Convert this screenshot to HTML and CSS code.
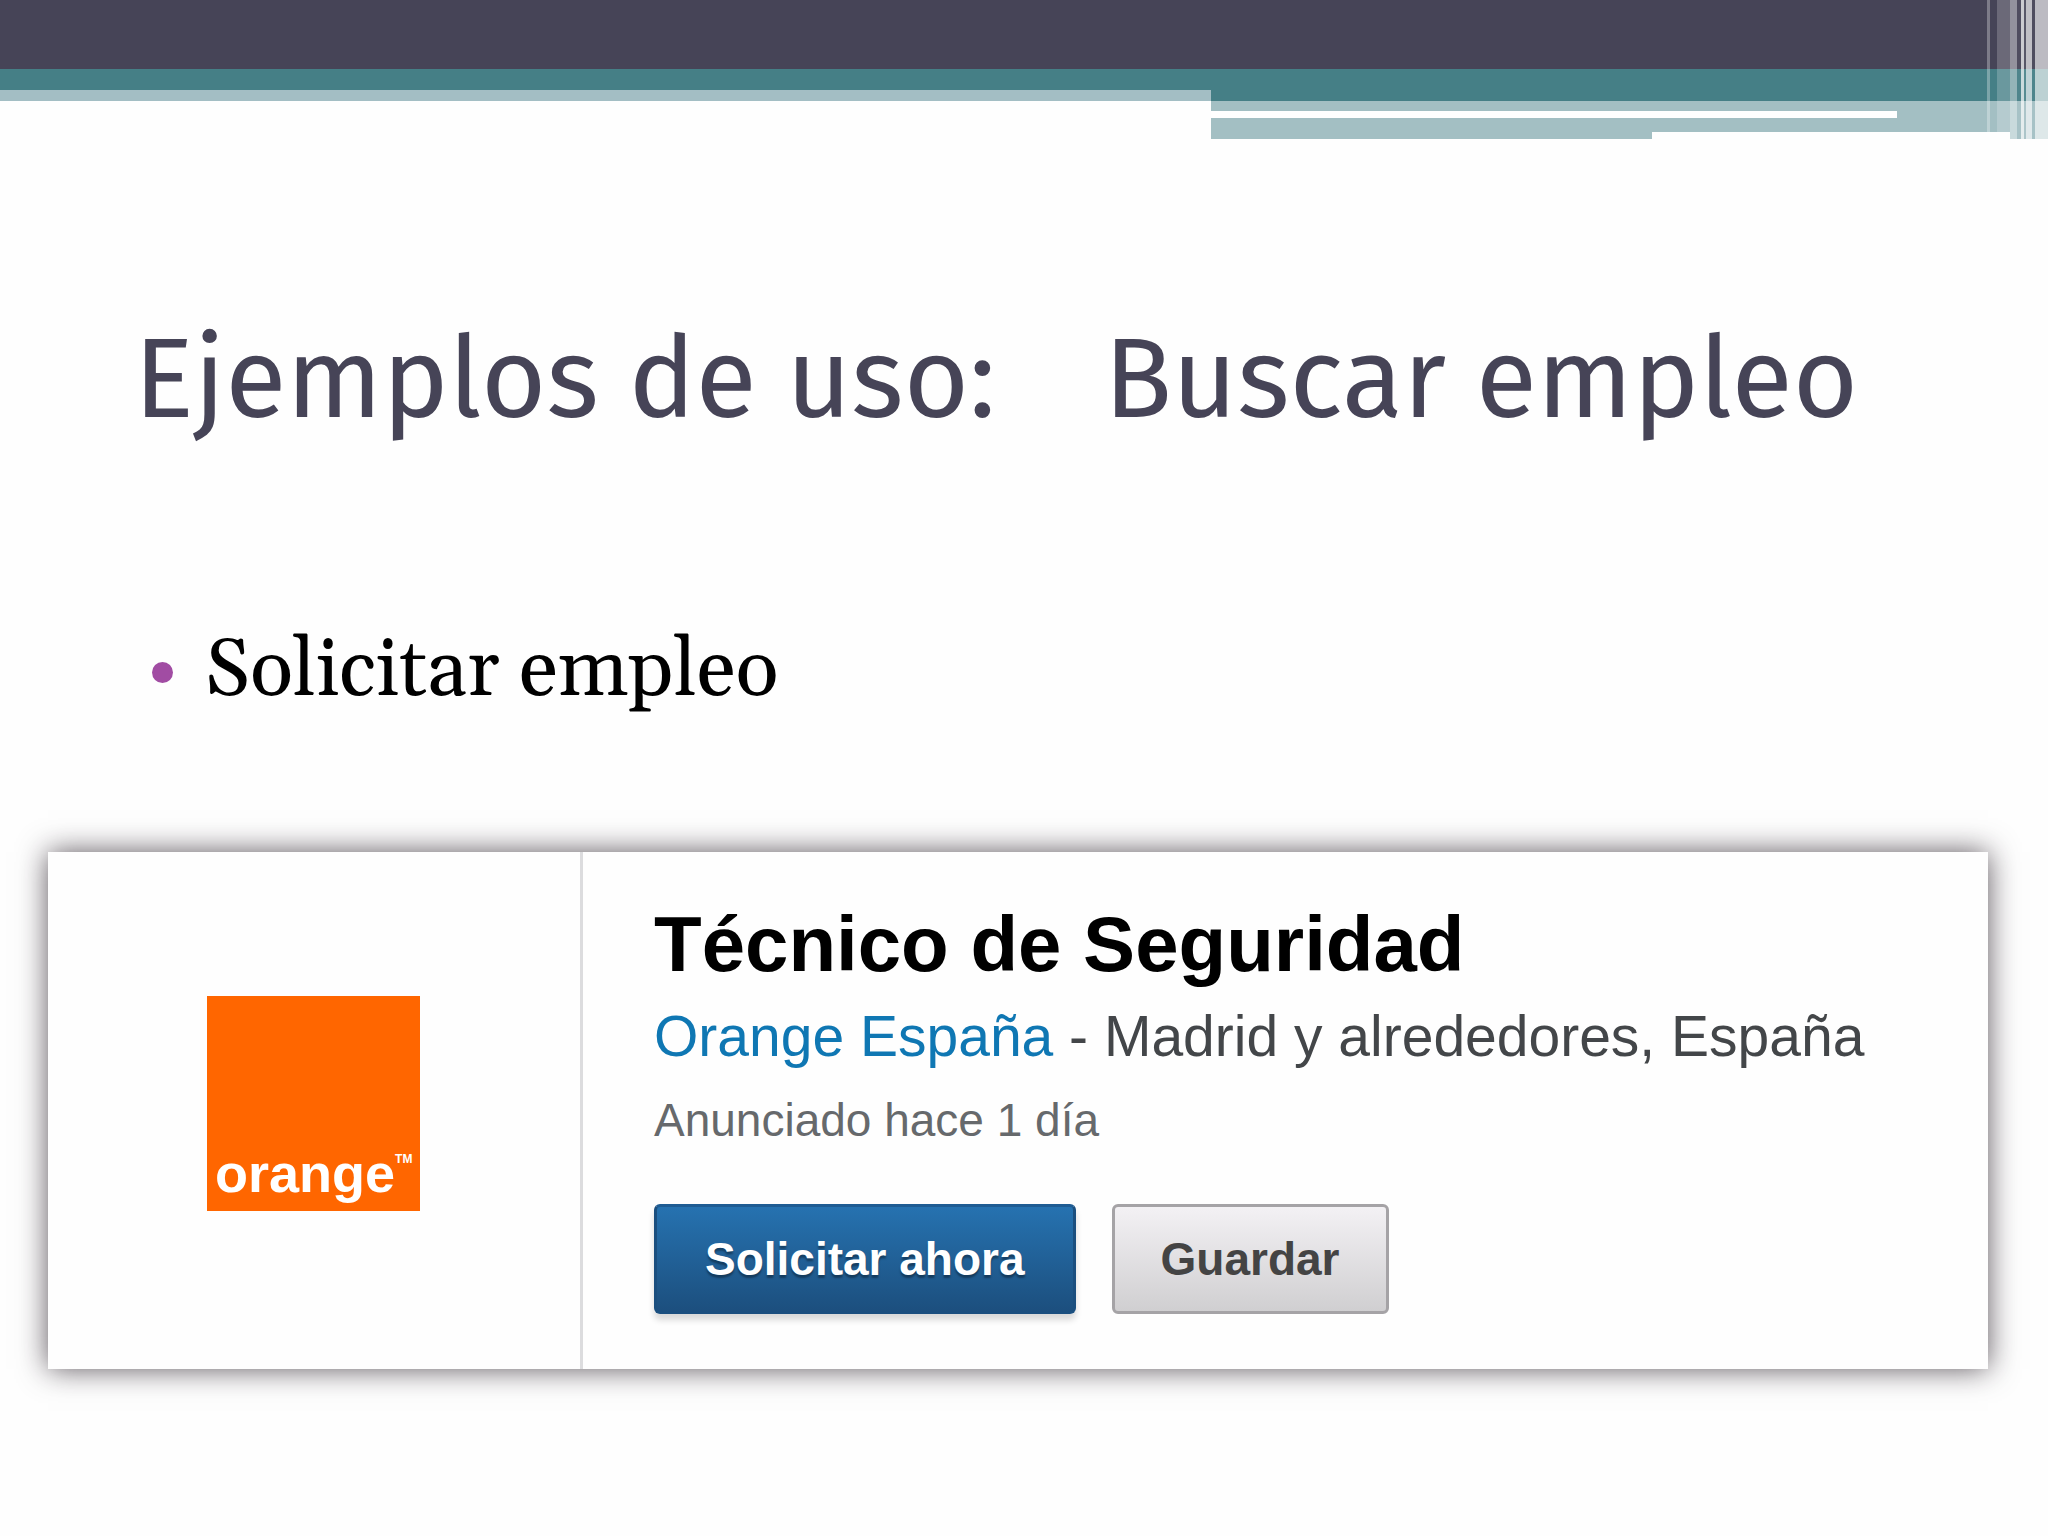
FILE: index.html
```html
<!DOCTYPE html>
<html lang="es">
<head>
<meta charset="utf-8">
<meta name="viewport" content="width=device-width, initial-scale=1">
<title>Ejemplos de uso: Buscar empleo</title>
<link rel="stylesheet" href="styles.css">
</head>
<body>
<header class="banner">
  <div class="banner-top"></div>
  <div class="banner-row">
    <div class="banner-left"></div>
    <div class="banner-right">
      <div class="band band-teal"></div>
      <div class="band band-pale"></div>
      <div class="band band-line"></div>
      <div class="band band-lower"></div>
      <div class="band band-ends"><span></span><span></span></div>
    </div>
  </div>
  <div class="stripes">
    <i class="s1"></i><i class="s2"></i><i class="s3"></i><i class="s4"></i><i class="s5"></i><i class="s6"></i><i class="s7"></i><i class="s8"></i><i class="s9"></i><i class="s10"></i>
  </div>
</header>
<main>
  <h1 class="title"><span>Ejemplos de uso:</span><span>Buscar empleo</span></h1>
  <ul class="points">
    <li>Solicitar empleo</li>
  </ul>
  <article class="job">
    <div class="job-brand">
      <div class="logo"><span class="logo-name">orange</span><span class="logo-mark">TM</span></div>
    </div>
    <div class="job-info">
      <h2 class="job-title">Técnico de Seguridad</h2>
      <p class="job-place"><a href="#">Orange España</a> - Madrid y alrededores, España</p>
      <p class="job-date">Anunciado hace 1 día</p>
      <div class="actions">
        <button type="button" class="btn btn-primary">Solicitar ahora</button>
        <button type="button" class="btn btn-plain">Guardar</button>
      </div>
    </div>
  </article>
</main>
</body>
</html>
```
FILE: styles.css
```css
* { box-sizing: border-box; }

body {
  margin: 0;
  background: #fefefe;
  color: #000;
  font-family: Arial, "Liberation Sans", sans-serif;
}

/* Banner */
.banner { position: relative; }
.banner-top { height: 69px; background: #464457; }
.banner-row { display: flex; align-items: flex-start; height: 70px; }
.banner-left {
  flex: 1211;
  height: 32px;
  background: #457f86;
  border-bottom: 11px solid #a3bec4;
}
.banner-right { flex: 837; }
.band-teal { height: 32px; background: #457f86; }
.band-pale { height: 10px; background: #a3bfc3; }
.band-line { height: 7px; background: linear-gradient(90deg, #fff 82%, #a3bfc3 82%); }
.band-lower { height: 14px; background: #a3bfc3; }
.band-ends { height: 7px; display: flex; justify-content: space-between; }
.band-ends span { width: 38px; background: #a3bfc3; }
.band-ends span:first-child { flex: 0 0 441px; }

.stripes {
  position: absolute;
  top: 0;
  right: 0;
  height: 139px;
  display: flex;
}
.stripes i { background: #fff; }
.s1 { width: 3px; opacity: .3; }
.s2 { width: 7px; opacity: 0; }
.s3 { width: 13px; opacity: .2; }
.s4 { width: 7px; opacity: .42; }
.s5 { width: 4px; opacity: .05; }
.s6 { width: 3px; opacity: .72; }
.s7 { width: 2px; opacity: .1; }
.s8 { width: 6px; opacity: .66; }
.s9 { width: 3px; opacity: .05; }
.s10 { width: 13px; opacity: .64; }

/* Heading and bullet */
.title {
  display: flex;
  gap: 108px;
  margin: 169px 0 0;
  padding-left: 134px;
  color: #464457;
  font: 400 112px/144px "Trebuchet MS", "Fira Sans", "Open Sans", sans-serif;
  white-space: nowrap;
}
.points {
  margin: 172px 0 0;
  padding: 0 0 0 152px;
  list-style: none;
  font: 80px/96px Georgia, Gelasio, "Liberation Serif", serif;
}
.points li { display: flex; align-items: center; gap: 32px; }
.points li::before {
  content: "";
  width: 21px;
  height: 21px;
  border-radius: 50%;
  background: #a14ca3;
}

/* Job card */
.job {
  display: flex;
  margin: 132px 60px 60px 48px;
  background: #fefefe;
  box-shadow: 0 0 28px rgba(25, 15, 25, .7);
}
.job-brand {
  flex: 0 0 535px;
  display: flex;
  align-items: center;
  padding: 0 0 14px 159px;
  border-right: 3px solid #dcdcde;
}
.logo {
  width: 213px;
  height: 215px;
  padding: 0 0 10px 8px;
  display: flex;
  align-items: flex-end;
  background: #ff6600;
  color: #fff;
}
.logo-name { font: 700 54px/56px Arial, "Liberation Sans", sans-serif; }
.logo-mark { margin-bottom: 36px; font: 700 12px/12px Arial, "Liberation Sans", sans-serif; }
.job-info { flex: 1; padding: 46px 0 55px 71px; white-space: nowrap; }
.job-title { margin: 0; font-size: 78px; line-height: 92px; }
.job-place { margin: 0; color: #434649; font-size: 57px; line-height: 92px; }
.job-place a { color: #0f77b3; text-decoration: none; }
.job-date { margin: 0; color: #66696c; font-size: 46px; line-height: 76px; }
.actions { display: flex; gap: 36px; margin-top: 46px; }
.btn {
  height: 110px;
  border-radius: 6px;
  font: 700 46px/56px Arial, "Liberation Sans", sans-serif;
}
.btn-primary {
  padding: 0 48px;
  border: 3px solid #1b4f7f;
  border-top-color: #1f5c93;
  background: linear-gradient(#2672b0, #1c4f7e);
  color: #fff;
  text-shadow: 0 3px 2px rgba(0, 0, 0, .35);
  box-shadow: 0 6px 6px rgba(0, 0, 0, .15);
}
.btn-plain {
  padding: 0 46px;
  border: 3px solid #a5a3a6;
  background: linear-gradient(#f3f1f4, #d0cfd1);
  color: #444;
}
```
